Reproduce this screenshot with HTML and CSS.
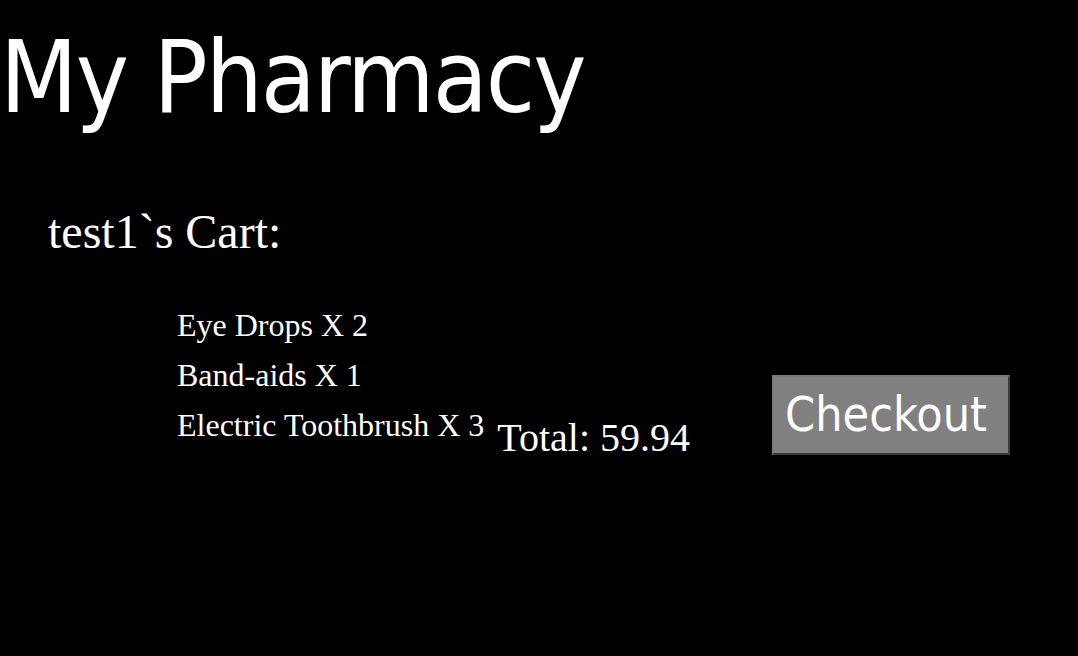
FILE: index.html
```html
<!DOCTYPE html>
<html>
<head>
<meta charset="utf-8">
<link rel="stylesheet" href="styles.css">
</head>
<body>
<h1 class="title">My Pharmacy</h1>
<h2 class="cart-title">test1`s Cart:</h2>
<div class="cart-row">
  <ul class="items">
    <li>Eye Drops X 2</li>
    <li>Band-aids X 1</li>
    <li>Electric Toothbrush X 3</li>
  </ul>
  <div class="total">Total: 59.94</div>
  <button class="checkout">Checkout</button>
</div>
</body>
</html>
```

FILE: styles.css
```css
html, body {
  margin: 0;
  padding: 0;
  background: #000;
  color: #fff;
  font-family: "Liberation Serif", "Times New Roman", serif;
}

.title {
  margin: 0;
  padding-top: 28px;
  font-family: "DejaVu Sans Condensed", "DejaVu Sans", sans-serif;
  font-stretch: condensed;
  font-weight: normal;
  font-size: 100px;
  line-height: 100px;
  letter-spacing: -2px;
  white-space: nowrap;
}

.cart-title {
  margin: 76px 0 0 48px;
  font-weight: normal;
  font-size: 48px;
  line-height: 56px;
}

.cart-row {
  display: flex;
  align-items: flex-start;
  margin-top: 40px;
}

.items {
  list-style: none;
  margin: 0 0 0 177px;
  padding: 0;
  font-size: 32px;
  line-height: 50px;
  white-space: nowrap;
}

.total {
  margin: 115px 0 0 13px;
  font-size: 40px;
  line-height: 46px;
  white-space: nowrap;
}

.checkout {
  margin: 75px 0 0 82px;
  width: 238px;
  height: 80px;
  padding: 0 0 2px 11px;
  text-align: left;
  background: #808080;
  color: #fff;
  border: 2px solid;
  border-color: #7a7a7a #3c3c3c #3c3c3c #7a7a7a;
  font-family: "DejaVu Sans Condensed", "DejaVu Sans", sans-serif;
  font-stretch: condensed;
  font-size: 48px;
  line-height: 1;
}
```
